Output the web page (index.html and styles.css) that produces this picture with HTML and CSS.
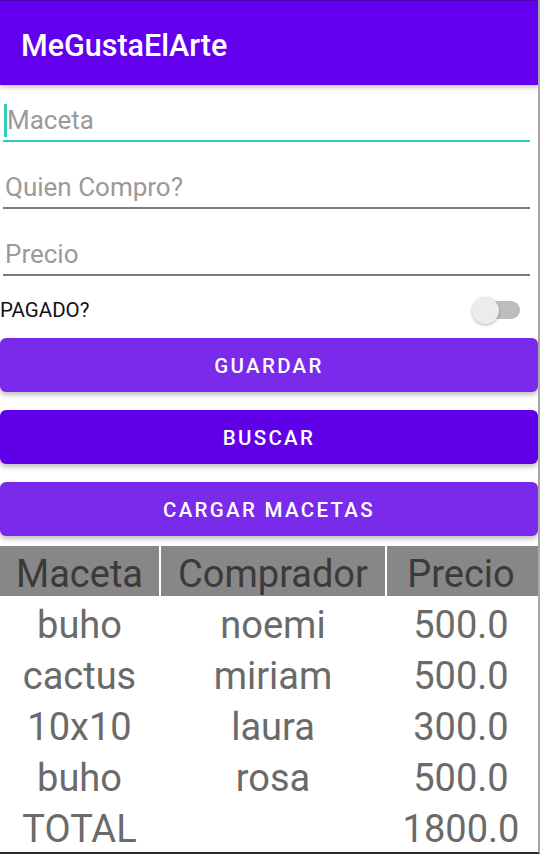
FILE: index.html
```html
<!DOCTYPE html>
<html lang="es">
<head>
<meta charset="utf-8">
<title>MeGustaElArte</title>
<link rel="stylesheet" href="styles.css">
</head>
<body>
<div class="screen">
  <header class="appbar">
    <h1 class="title">MeGustaElArte</h1>
  </header>

  <div class="field field-focus">
    <span class="cursor"></span><span class="hint">Maceta</span>
  </div>
  <div class="field">
    <span class="hint">Quien Compro?</span>
  </div>
  <div class="field">
    <span class="hint">Precio</span>
  </div>

  <div class="switch-row">
    <span class="switch-label">PAGADO?</span>
    <span class="switch">
      <span class="track"></span>
      <span class="thumb"></span>
    </span>
  </div>

  <div class="buttons">
    <button class="btn btn-light">GUARDAR</button>
    <button class="btn btn-dark">BUSCAR</button>
    <button class="btn btn-light">CARGAR MACETAS</button>
  </div>

  <div class="table">
    <div class="row head">
      <span class="cell">Maceta</span>
      <span class="cell">Comprador</span>
      <span class="cell">Precio</span>
    </div>
    <div class="row">
      <span class="cell">buho</span>
      <span class="cell">noemi</span>
      <span class="cell">500.0</span>
    </div>
    <div class="row">
      <span class="cell">cactus</span>
      <span class="cell">miriam</span>
      <span class="cell">500.0</span>
    </div>
    <div class="row">
      <span class="cell">10x10</span>
      <span class="cell">laura</span>
      <span class="cell">300.0</span>
    </div>
    <div class="row">
      <span class="cell">buho</span>
      <span class="cell">rosa</span>
      <span class="cell">500.0</span>
    </div>
    <div class="row">
      <span class="cell">TOTAL</span>
      <span class="cell"></span>
      <span class="cell">1800.0</span>
    </div>
  </div>
</div>
</body>
</html>
```

FILE: styles.css
```css
* { box-sizing: border-box; }

html, body {
  margin: 0;
  padding: 0;
  background: #ffffff;
}

body {
  font-family: Roboto, "Noto Sans", "Liberation Sans", sans-serif;
  width: 541px;
  height: 854px;
  overflow: hidden;
}

.screen {
  width: 540px;
  height: 854px;
  border-right: 2px solid #a6a6a6;
  border-bottom: 2px solid #2c2c2c;
  display: flex;
  flex-direction: column;
  overflow: hidden;
}

.appbar {
  height: 85px;
  flex: none;
  background: #6200ee;
  border-top: 1px solid #4a00b4;
  margin-right: -2px;
  border-right: 2px solid #b999f4;
  display: flex;
  align-items: center;
  padding-left: 21px;
  padding-top: 4px;
  box-shadow: 0 2px 5px rgba(0, 0, 0, 0.28);
  position: relative;
  z-index: 2;
}

.title {
  margin: 0;
  color: #ffffff;
  font-size: 30.5px;
  font-weight: 500;
  letter-spacing: 0;
}

.field {
  margin: 25px 8px 0 3px;
  height: 42px;
  border-bottom: 2px solid #7a7a7a;
  display: flex;
  align-items: center;
  padding-left: 2px;
}

.field-focus {
  margin-top: 15px;
  border-bottom-color: #2fcab8;
}

.cursor {
  width: 3px;
  height: 33px;
  background: #2fcab8;
  margin-left: -1px;
}

.hint {
  color: #9a9a9a;
  font-size: 26px;
  line-height: 40px;
}

.switch-row {
  margin-top: 12px;
  height: 44px;
  display: flex;
  align-items: center;
  justify-content: space-between;
  padding-right: 18px;
}

.switch-label {
  color: #111111;
  font-size: 20.5px;
}

.switch {
  position: relative;
  width: 48px;
  height: 28px;
  display: flex;
  align-items: center;
}

.track {
  position: absolute;
  left: 2px;
  right: 0;
  height: 18px;
  border-radius: 9px;
  background: #bdbdbd;
}

.thumb {
  position: absolute;
  left: 0;
  width: 27px;
  height: 27px;
  border-radius: 50%;
  background: #ececec;
  box-shadow: 0 1px 3px rgba(0, 0, 0, 0.3);
}

.buttons {
  margin-top: 6px;
  display: flex;
  flex-direction: column;
  gap: 18px;
}

.btn {
  height: 54px;
  width: 538px;
  border: none;
  border-radius: 6px;
  color: #ffffff;
  font-family: Roboto, "Noto Sans", sans-serif;
  font-size: 20.5px;
  font-weight: 500;
  letter-spacing: 2.3px;
  box-shadow: 0 3px 5px rgba(0, 0, 0, 0.25);
  padding: 2px 0 0 0;
}

.btn-light { background: #7a2aeb; }
.btn-dark { background: #5f00e8; }

.table {
  margin-top: 10px;
  display: flex;
  flex-direction: column;
}

.row {
  display: grid;
  grid-template-columns: 159px 224px 151px;
  column-gap: 2px;
  height: 51px;
}

.row.head {
  height: 50px;
  background: #ffffff;
}

.cell {
  text-align: center;
  font-size: 38px;
  color: #6a6a6a;
  line-height: 51px;
  padding-top: 4px;
}

.head .cell {
  background: #878787;
  color: #3a3a3a;
  line-height: 50px;
  height: 50px;
  padding-top: 3px;
}

.row .cell:nth-child(3) {
  padding-right: 3px;
}
```
